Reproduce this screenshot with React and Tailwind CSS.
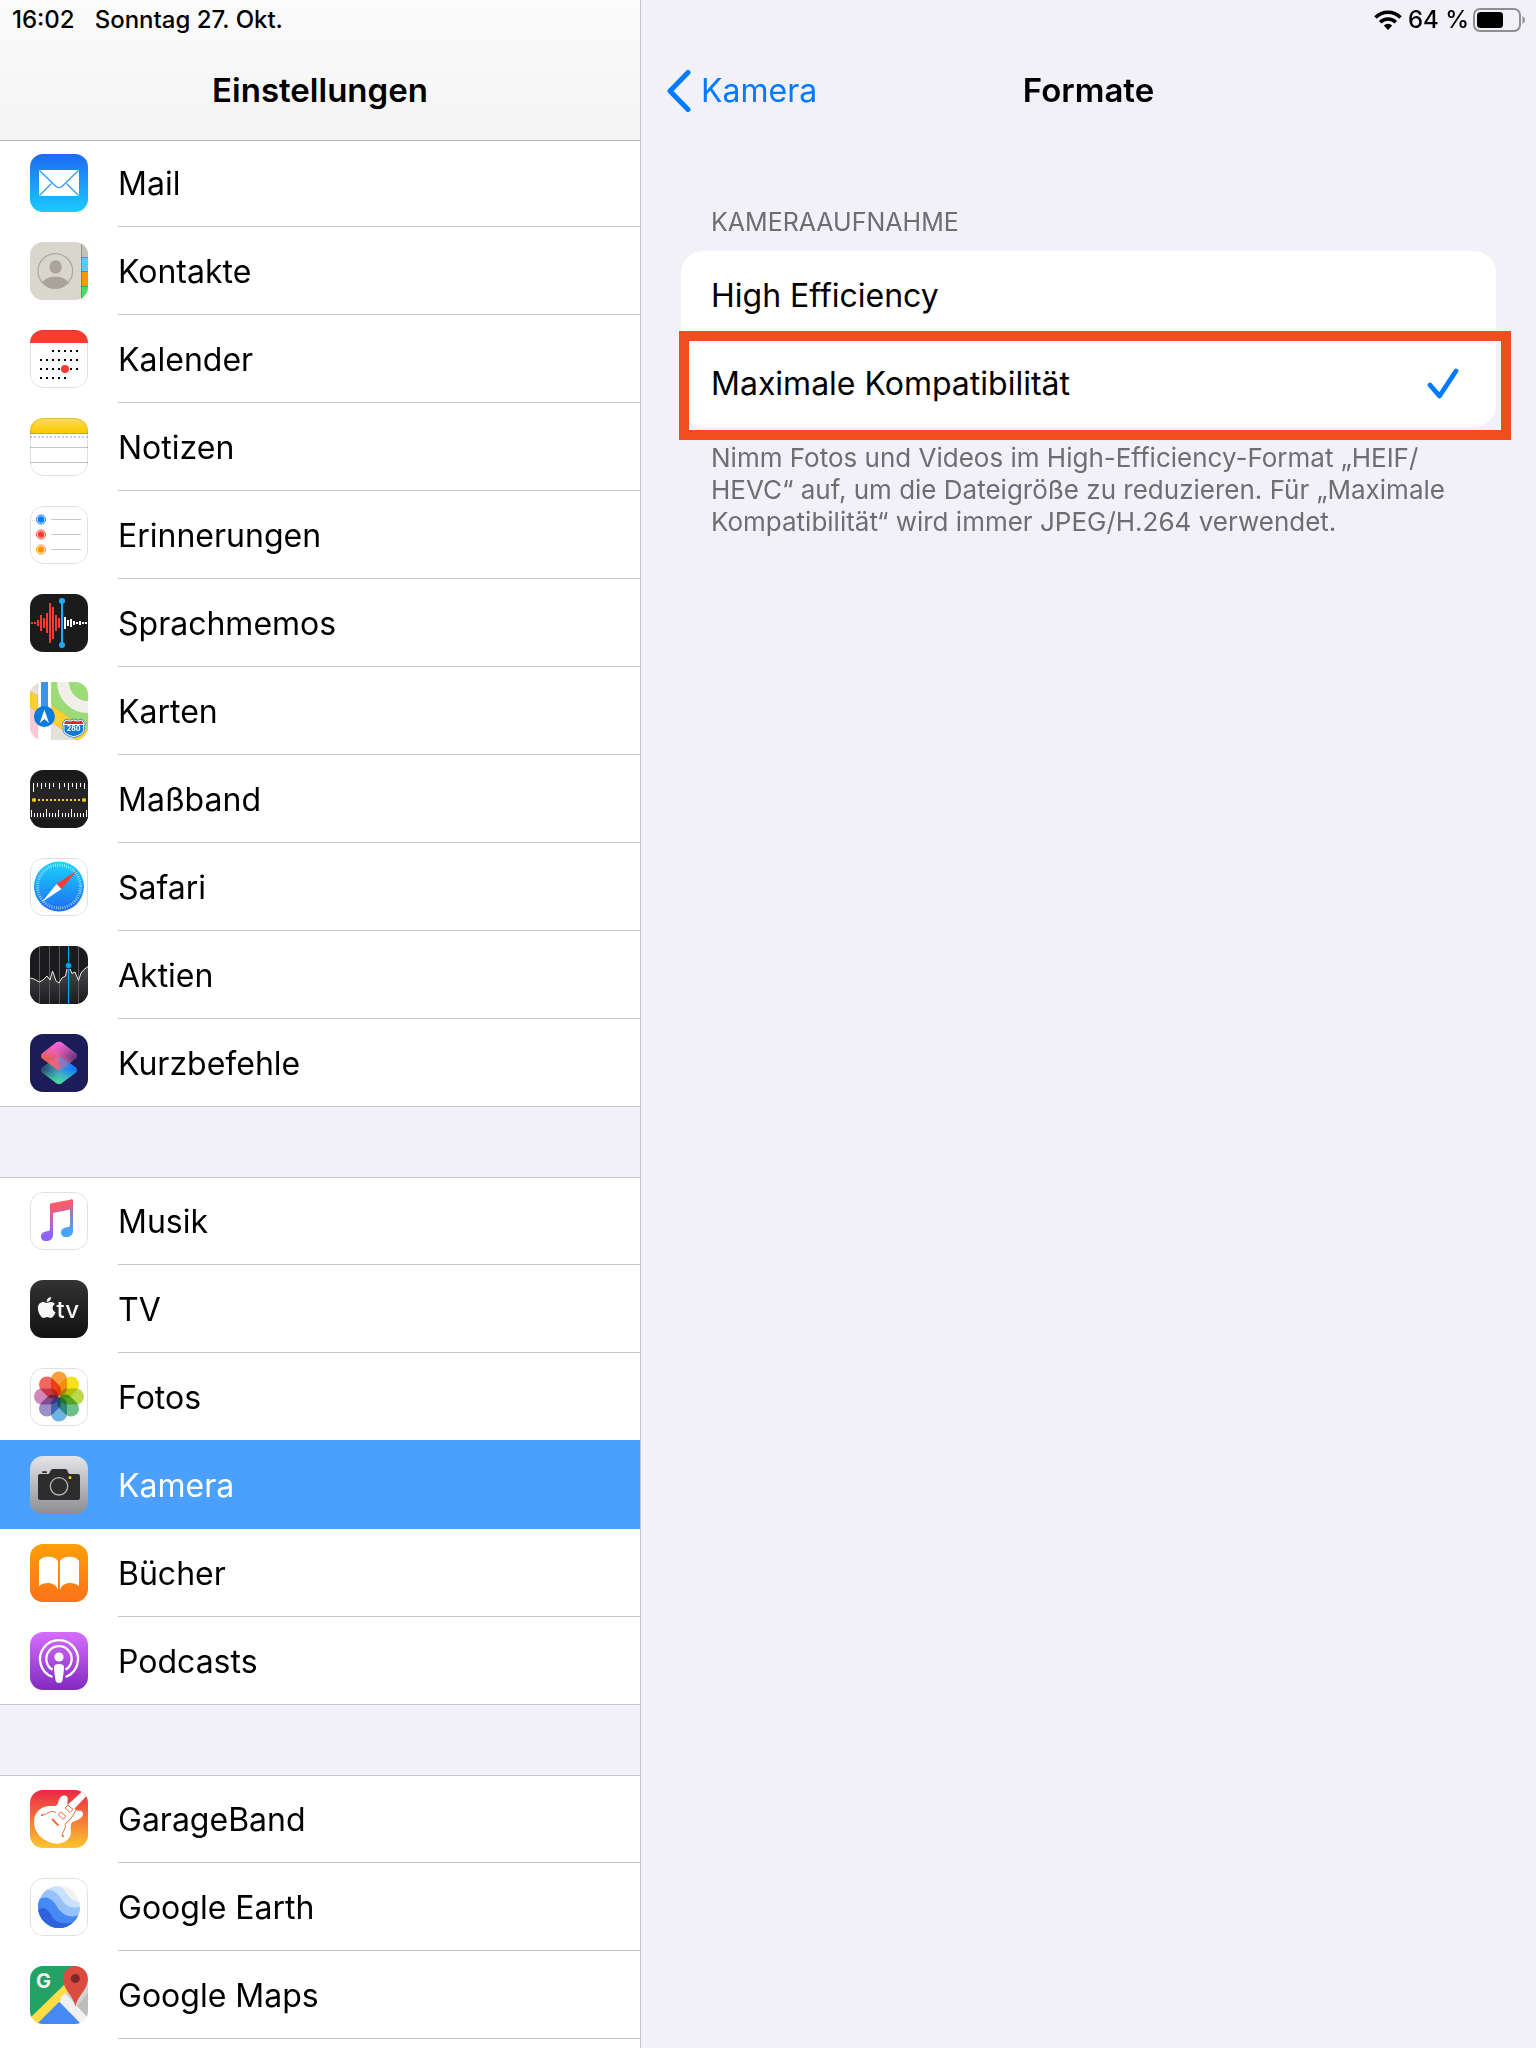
import React, { useState } from 'react';
import { FaApple } from 'react-icons/fa';

// Vertical gradient used by most of the app icons
const Fade = ({ id, from, to }) => (
    <linearGradient id={id} x1="0" y1="0" x2="0" y2="1">
        <stop offset="0" stopColor={from} />
        <stop offset="1" stopColor={to} />
    </linearGradient>
);

const Icon = ({ outlined, children }) => (
    <svg viewBox="0 0 58 58" className="size-[58px] shrink-0 rounded-[13px]" aria-hidden="true">
        {children}
        {outlined && <rect x="0.5" y="0.5" width="57" height="57" rx="12.5" fill="none" stroke="#000" strokeOpacity="0.12" />}
    </svg>
);

const MailIcon = () => (
    <Icon>
        <defs><Fade id="mail" from="#1d6bf2" to="#1bcafe" /></defs>
        <rect width="58" height="58" fill="url(#mail)" />
        <rect x="9" y="16" width="40" height="26" rx="1" fill="#fff" />
        <path d="M9.5 16.5L25 31.5Q29 36 33 31.5L48.5 16.5M9.5 41.5L21.5 29.5M48.5 41.5L36.5 29.5" fill="none" stroke="#2f97f7" strokeWidth="1.2" />
    </Icon>
);

const ContactsIcon = () => (
    <Icon>
        <defs>
            <clipPath id="contactClip"><circle cx="25.3" cy="29" r="17.5" /></clipPath>
        </defs>
        <rect width="58" height="58" fill="#d9d6cd" />
        <rect x="51" width="7" height="15" fill="#c3c0b7" />
        <rect x="51" y="15" width="7" height="14" fill="#5ac8fa" />
        <rect x="51" y="29" width="7" height="15" fill="#ff9500" />
        <rect x="51" y="44" width="7" height="14" fill="#4cd964" />
        <path d="M51.5 0V58M51 15.5H58M51 29.5H58M51 44.5H58" stroke="#000" strokeOpacity="0.22" />
        <circle cx="25.3" cy="29" r="17.3" fill="none" stroke="#aca79e" strokeWidth="1.2" />
        <g fill="#aaa39c" clipPath="url(#contactClip)">
            <ellipse cx="25.6" cy="25" rx="6.2" ry="6.8" />
            <ellipse cx="25.3" cy="46" rx="15" ry="11.5" />
        </g>
    </Icon>
);

const calendarRows = [
    [23, 29, 35, 41, 47],
    [11, 17, 23, 29, 35, 41, 47],
    [11, 17, 23, 29, 35, 41, 47],
    [11, 17, 23, 29, 35],
];

const CalendarIcon = () => (
    <Icon outlined>
        <rect width="58" height="58" fill="#fff" />
        <rect width="58" height="13" fill="#ff3b30" />
        {calendarRows.map((row, r) => row.map((x) => (
            <rect key={`${r}-${x}`} x={x - 1} y={20 + r * 9} width="2" height="2" />
        )))}
        <circle cx="35" cy="39" r="4" fill="#ff3b30" />
    </Icon>
);

const NotesIcon = () => (
    <Icon outlined>
        <defs><Fade id="notes" from="#fedc58" to="#fcc800" /></defs>
        <rect width="58" height="58" fill="#fff" />
        <rect width="58" height="15" fill="url(#notes)" />
        <path d="M0 15.5H58" stroke="#a9a28c" />
        <path d="M0 19H58" stroke="#cfcfcf" strokeWidth="2" strokeDasharray="2 2" />
        <path d="M0 29.5H58M0 44.5H58" stroke="#c6c6c6" />
    </Icon>
);

const RemindersIcon = () => (
    <Icon outlined>
        <rect width="58" height="58" fill="#fff" />
        {[[13.5, '#007aff'], [28.5, '#ff3b30'], [43.5, '#ff9500']].map(([y, color]) => (
            <g key={y}>
                <circle cx="11" cy={y} r="4.5" fill="none" stroke={color} />
                <circle cx="11" cy={y} r="3.2" fill={color} />
                <path d={`M21 ${y}H51`} stroke="#c8c8cc" />
            </g>
        ))}
    </Icon>
);

const VoiceMemosIcon = () => (
    <Icon>
        <rect width="58" height="58" fill="#1b1b1c" />
        {[1, 1, 3, 8, 5, 10, 20, 16, 8, 5].map((h, i) => (
            <rect key={i} x={1 + i * 3} y={29 - h} width="2" height={h * 2} fill="#ff3b30" />
        ))}
        {[6, 3, 4, 2, 1, 2, 1, 1].map((h, i) => (
            <rect key={i} x={34 + i * 3} y={29 - h} width="2" height={h * 2} fill="#fff" />
        ))}
        <path d="M32 7V51" stroke="#1badf8" strokeWidth="2" />
        <circle cx="32" cy="7" r="3" fill="#1badf8" />
        <circle cx="32" cy="51" r="3" fill="#1badf8" />
    </Icon>
);

const MapsIcon = () => (
    <Icon>
        <rect width="58" height="58" fill="#e4e1da" />
        <path d="M0 26L8 31V58H0Z" fill="#ffc9d5" />
        <path d="M21 0H58V49L21 23Z" fill="#9bdb78" />
        <circle cx="58" cy="0" r="25" fill="none" stroke="#f2efe8" strokeWidth="12" />
        <path d="M0 9L21 23L58 49V58H46L21 39L0 25Z" fill="#ffd030" stroke="#f2b21f" strokeWidth="0.7" />
        <rect x="8" width="13.3" height="58" fill="#fff" />
        <path d="M8 0V58M21.3 0V58" stroke="#000" strokeOpacity="0.12" strokeWidth="0.6" />
        <rect x="11" width="7" height="28" fill="#3c94e6" />
        <circle cx="14.4" cy="34.5" r="10.5" fill="#0a7bdd" />
        <path d="M14.4 27.5L19 41L14.4 37L9.8 41Z" fill="#fff" />
        <path d="M35.5 37Q40 39.5 43.7 37Q47.5 39.5 52 37L55.3 42C53 45 56 49 52.5 52Q49 54.5 43.7 55.7Q38.5 54.5 35 52C31.5 49 34.5 45 32.2 42Z" fill="#fff" stroke="#1d79cf" strokeWidth="0.8" />
        <path d="M36 38.6Q40 40.6 43.7 38.4Q47.5 40.6 51.5 38.6L53.7 42H33.8Z" fill="#e0242f" />
        <path d="M34 43H53.5C52 46 54.5 49 51.5 51Q48.5 53.3 43.7 54.3Q39 53.3 36 51C33 49 35.5 46 34 43Z" fill="#1479d4" />
        <text x="43.7" y="49.4" textAnchor="middle" fontFamily="Inter, sans-serif" fontSize="7" fontWeight="700" fill="#fff">280</text>
    </Icon>
);

const topTicks = [[3, 9], [7, 4], [11, 6], [15, 4], [19, 6], [23, 4], [29, 6], [34, 4], [38, 7], [42, 4], [46, 6], [50, 4], [54, 6]];
const bottomTicks = [[1, 7], [4, 4], [7, 4], [10, 4], [13, 4], [16, 8], [19, 4], [22, 4], [25, 4], [28, 7], [32, 4], [35, 4], [38, 4], [41, 8], [44, 4], [47, 4], [50, 4], [53, 4], [56, 7]];

const MeasureIcon = () => (
    <Icon>
        <rect width="58" height="58" fill="#1a1a1a" />
        <rect y="11" width="58" height="38" fill="#242424" />
        {topTicks.map(([x, h]) => <rect key={x} x={x} y="13" width="1" height={h} fill="#fff" />)}
        {bottomTicks.map(([x, h]) => <rect key={x} x={x} y={47 - h} width="1" height={h} fill="#fff" />)}
        <path d="M8 30H51" stroke="#ffcc00" strokeWidth="2" strokeDasharray="2 2" />
        <circle cx="4" cy="30" r="2.1" fill="#ffcc00" />
        <circle cx="54" cy="30" r="2.1" fill="#ffcc00" />
    </Icon>
);

const SafariIcon = () => (
    <Icon outlined>
        <defs><Fade id="safari" from="#1bd3fd" to="#1e6cf1" /></defs>
        <rect width="58" height="58" fill="#fff" />
        <circle cx="29" cy="28.5" r="25" fill="url(#safari)" />
        <circle cx="29" cy="28.5" r="21.5" fill="none" stroke="#fff" strokeOpacity="0.75" strokeWidth="3" strokeDasharray="0.7 1.55" />
        <path d="M47 12.5L31.5 31L26.5 26Z" fill="#ff3b30" />
        <path d="M12 44L26.5 26L31.5 31Z" fill="#fff" />
    </Icon>
);

const StocksIcon = () => (
    <Icon>
        <defs><Fade id="stocks" from="#4a4a4c" to="#1b1b1d" /></defs>
        <rect width="58" height="58" fill="#1b1b1d" />
        <path d="M0 32L4 33L9.5 36L13 34L17 30L20 34L22.5 25L26 35L29 37L32 32L35.5 30L37 22H40L42 27.5L45 26L48.5 34.5L51 27L54 23.5L58 20.5V58H0Z" fill="url(#stocks)" />
        <path d="M9.5 0V58M19.5 0V58M29.5 0V58M48.5 0V58" stroke="#59595b" />
        <path d="M0 32L4 33L9.5 36L13 34L17 30L20 34L22.5 25L26 35L29 37L32 32L35.5 30L37 23M40 23L42 27.5L45 26L48.5 34.5L51 27L54 23.5L58 20.5" fill="none" stroke="#e8e8e8" strokeWidth="1" strokeLinejoin="round" />
        <path d="M38.5 0V58" stroke="#00a6ff" />
        <circle cx="38.5" cy="19.5" r="3.2" fill="#00a6ff" stroke="#1b1b1d" />
    </Icon>
);

const ShortcutsIcon = () => (
    <Icon>
        <defs>
            <linearGradient id="shortTop" x1="0.2" y1="0.8" x2="0.9" y2="0.5">
                <stop offset="0" stopColor="#ff6453" />
                <stop offset="0.5" stopColor="#ee5f9c" />
                <stop offset="1" stopColor="#6b3a80" />
            </linearGradient>
            <linearGradient id="shortPink" x1="0" y1="0" x2="0" y2="1">
                <stop offset="0" stopColor="#ff66e0" />
                <stop offset="0.55" stopColor="#ff66e0" stopOpacity="0" />
            </linearGradient>
            <linearGradient id="shortBottom" x1="0.1" y1="0.5" x2="0.9" y2="0.5">
                <stop offset="0" stopColor="#2c5574" />
                <stop offset="0.5" stopColor="#3e9ecb" />
                <stop offset="1" stopColor="#137dff" />
            </linearGradient>
            <linearGradient id="shortGreen" x1="0" y1="1" x2="0" y2="0">
                <stop offset="0" stopColor="#47e09c" />
                <stop offset="0.5" stopColor="#47e09c" stopOpacity="0" />
            </linearGradient>
        </defs>
        <rect width="58" height="58" fill="#1c1c58" />
        <path d="M25.5 23.5Q29 21 32.5 23.5L46 33.5Q48 36 46 38.5L32.5 48.5Q29 51.5 25.5 48.5L12 38.5Q10 36 12 33.5Z" fill="url(#shortBottom)" />
        <path d="M25.5 23.5Q29 21 32.5 23.5L46 33.5Q48 36 46 38.5L32.5 48.5Q29 51.5 25.5 48.5L12 38.5Q10 36 12 33.5Z" fill="url(#shortGreen)" />
        <path d="M25.5 9Q29 6.5 32.5 9L46 19.5Q48 22 46 24.5L32.5 34.5Q29 37.5 25.5 34.5L12 24.5Q10 22 12 19.5Z" fill="url(#shortTop)" fillOpacity="0.92" />
        <path d="M25.5 9Q29 6.5 32.5 9L46 19.5Q48 22 46 24.5L32.5 34.5Q29 37.5 25.5 34.5L12 24.5Q10 22 12 19.5Z" fill="url(#shortPink)" />
        <path d="M29 22Q31 22 32.5 23.5L40 29L32.5 34.5Q30.5 36 29 36Z" fill="#3d8fe0" fillOpacity="0.5" />
    </Icon>
);

const MusicIcon = () => (
    <Icon outlined>
        <defs>
            <linearGradient id="music" gradientUnits="userSpaceOnUse" x1="24" y1="10" x2="30" y2="46">
                <stop offset="0.1" stopColor="#fc5c65" />
                <stop offset="0.5" stopColor="#b865c4" />
                <stop offset="0.9" stopColor="#8a63ff" />
            </linearGradient>
            <linearGradient id="musicBlue" gradientUnits="userSpaceOnUse" x1="41" y1="10" x2="41" y2="40">
                <stop offset="0" stopColor="#f05a76" />
                <stop offset="0.5" stopColor="#7e86cf" />
                <stop offset="1" stopColor="#45a6fc" />
            </linearGradient>
        </defs>
        <rect width="58" height="58" fill="#fff" />
        <path d="M20 13Q20 11.5 21.5 11.2L41.5 7.6Q43 7.4 43 9V18L40 17.6L23 21V43C23 47 20 49 16 49C12.5 49 11 47 11 44.5C11 41 14 39.7 17 39.2C19.5 38.8 20 38.5 20 36Z" fill="url(#music)" />
        <path d="M40 8L41.5 7.6Q43 7.4 43 9V39C43 43 40 45 36 45C32.5 45 31 43 31 40.5C31 37 34 35.7 37 35.2C39.5 34.8 40 34.5 40 32Z" fill="url(#musicBlue)" />
    </Icon>
);

const TvIcon = () => (
    <Icon>
        <defs><Fade id="tv" from="#333" to="#111" /></defs>
        <rect width="58" height="58" fill="url(#tv)" />
        <FaApple x="4.7" y="15.4" size={24} color="#f6f6f6" />
        <text x="26.5" y="37.7" fontFamily="Inter, sans-serif" fontSize="24" fontWeight="500" fill="#f6f6f6">tv</text>
    </Icon>
);

const petals = ['#fa9f3b', '#f8e11c', '#b9da4c', '#6cc088', '#6fb3e2', '#9b8ec9', '#d288b8', '#f06762'];

const PhotosIcon = () => (
    <Icon outlined>
        <rect width="58" height="58" fill="#fff" />
        {petals.map((color, i) => (
            <rect key={color} x="21" y="3.5" width="16" height="24.5" rx="8" fill={color} transform={`rotate(${i * 45} 29 28.5)`} className="mix-blend-multiply" />
        ))}
    </Icon>
);

const CameraIcon = () => (
    <Icon>
        <defs><Fade id="camera" from="#e5e4e9" to="#8d8c91" /></defs>
        <rect width="58" height="58" fill="url(#camera)" />
        <path d="M8 20Q8 18 10 18H18C21 17.5 19.5 13 23 13H35C38.5 13 37 17.5 40 18H48Q50 18 50 20V42Q50 44 48 44H10Q8 44 8 42Z" fill="#2d2d2d" />
        <rect x="12" y="15.3" width="5" height="1.7" rx="0.8" fill="#2d2d2d" />
        <circle cx="29" cy="30.3" r="8.7" fill="none" stroke="#b4b4b6" strokeWidth="1.3" />
        <circle cx="40" cy="21.5" r="1.5" fill="#ffcc00" />
    </Icon>
);

const BooksIcon = () => (
    <Icon>
        <defs><Fade id="books" from="#fe9f07" to="#fa7219" /></defs>
        <rect width="58" height="58" fill="url(#books)" />
        <path d="M9 17C12 11.5 25.5 11 28 17.5V46C25.5 37.5 14.5 37.5 9 42Z" fill="#fff" />
        <path d="M49 17C46 11.5 32.5 11 30 17.5V46C32.5 37.5 43.5 37.5 49 42Z" fill="#fff" />
    </Icon>
);

const PodcastsIcon = () => (
    <Icon>
        <defs><Fade id="podcasts" from="#d66efd" to="#822abf" /></defs>
        <rect width="58" height="58" fill="url(#podcasts)" />
        <path d="M22.5 45A19 19 0 1 1 35.5 45" fill="none" stroke="#fff" strokeWidth="2.3" />
        <path d="M22.5 37.8A12.7 12.7 0 1 1 35.5 37.8" fill="none" stroke="#fff" strokeWidth="2.3" />
        <circle cx="29" cy="25" r="4.6" fill="#fff" />
        <path d="M24 35Q24 32 29 32Q34 32 34 35C34 39 33 45 32.3 49Q31.8 51 29 51Q26.2 51 25.7 49C25 45 24 39 24 35Z" fill="#fff" />
    </Icon>
);

const GarageBandIcon = () => (
    <Icon>
        <defs><Fade id="garage" from="#ea2746" to="#fdc62c" /></defs>
        <rect width="58" height="58" fill="url(#garage)" />
        <path d="M4 32C4 22 11 16.5 19 16C24 15.8 27 17 28 13C29 8 31 5.5 35 5.5C39.5 6.5 37 11 37.5 15L52 1.5L56.5 6L44.5 18.5C47 22.5 52 19 53 23C53.5 28 48 30 43.5 31.5C38.5 34 42 40 40.5 45C38 52.5 29 55.5 20 52.5C10 48.5 4 41 4 32Z" fill="#fff" />
        <g fill="none" stroke="#f2663a" strokeWidth="1">
            <path d="M28 24.5L31 21.8L36 26.5L33 29.3ZM35 18L38 15L43 19.5L40 22.5Z" />
            <path d="M22 29L28.5 35.5" strokeWidth="1.8" />
            <path d="M11 25C15 26 18 21.5 23 21.5C25 21.5 26 22 25 23M35 34.5C37 37 33 40 32 45.5C32 47 33 46.5 33.5 46M35 34.5L42 27L46 20" />
        </g>
        <g fill="#f2663a">
            <circle cx="12" cy="25" r="1" />
            <circle cx="33" cy="46" r="0.9" />
        </g>
    </Icon>
);

const EarthIcon = () => (
    <Icon outlined>
        <defs>
            <clipPath id="globe"><circle cx="29" cy="29" r="21" /></clipPath>
        </defs>
        <rect width="58" height="58" fill="#fff" />
        <g clipPath="url(#globe)">
            <rect x="8" y="8" width="42" height="42" fill="#f1f1f2" />
            <path d="M8 12C20 4 30 6 35 13C39 19 42 24 50 24V50H8Z" fill="#c7e2ff" />
            <path d="M8 15C17 9 25 12 30 19C35 27 39 31 50 29V50H8Z" fill="#97c1fc" />
            <path d="M8 23C13 17 21 19 26 27C31 36 38 41 50 37V50H8Z" fill="#4688f4" />
            <path d="M8 33C12 27 18 31 21 37C26 46 35 47 44 44V52H8Z" fill="#2d62dc" />
        </g>
    </Icon>
);

const GoogleMapsIcon = () => (
    <Icon>
        <rect width="58" height="58" fill="#22a365" />
        <path d="M29 27L58 4V58H45Z" fill="#d1d1d1" />
        <path d="M46 42L58 27V54Z" fill="#bdbdbd" />
        <path d="M6 58L29.5 34L52 58Z" fill="#4688f4" />
        <path d="M30 27L60 58H51L29 35.5L26 32Z" fill="#f1f1f1" />
        <path d="M0 52L36 17L41 24L7 58H0Z" fill="#ffdd44" />
        <path d="M30 32L35 27L47 40L60 54V58H56Z" fill="#f1f1f1" />
        <path d="M45.3 41C44.5 31 33 24 33 12.5A12.5 12.5 0 0 1 58 12.5C58 24 46.3 31 45.3 41Z" fill="#db4b3f" />
        <circle cx="45.3" cy="12.5" r="4.5" fill="#7e2b27" />
        <text x="6" y="21.8" fontFamily="Inter, sans-serif" fontSize="20" fontWeight="700" fill="#f3f3f3">G</text>
    </Icon>
);

const groups = [
    [
        { name: 'Mail', icon: MailIcon },
        { name: 'Kontakte', icon: ContactsIcon },
        { name: 'Kalender', icon: CalendarIcon },
        { name: 'Notizen', icon: NotesIcon },
        { name: 'Erinnerungen', icon: RemindersIcon },
        { name: 'Sprachmemos', icon: VoiceMemosIcon },
        { name: 'Karten', icon: MapsIcon },
        { name: 'Maßband', icon: MeasureIcon },
        { name: 'Safari', icon: SafariIcon },
        { name: 'Aktien', icon: StocksIcon },
        { name: 'Kurzbefehle', icon: ShortcutsIcon },
    ],
    [
        { name: 'Musik', icon: MusicIcon },
        { name: 'TV', icon: TvIcon },
        { name: 'Fotos', icon: PhotosIcon },
        { name: 'Kamera', icon: CameraIcon },
        { name: 'Bücher', icon: BooksIcon },
        { name: 'Podcasts', icon: PodcastsIcon },
    ],
    [
        { name: 'GarageBand', icon: GarageBandIcon },
        { name: 'Google Earth', icon: EarthIcon },
        { name: 'Google Maps', icon: GoogleMapsIcon },
    ],
];

// The active row covers the separator of the row above it
const SidebarRow = ({ name, icon: AppIcon, active, last, onSelect }) => (
    <li>
        <button
            type="button"
            onClick={() => onSelect(name)}
            className={`flex w-full items-center gap-[30px] pl-[30px] text-left ${active ? 'relative -mt-px h-[89px] bg-[#4ba0ff] pt-px text-white' : 'h-[88px]'}`}
        >
            <AppIcon />
            <span className={`flex h-full flex-1 items-center pt-0.5 ${last || active ? '' : 'border-b border-[#c6c6c8]'}`}>{name}</span>
        </button>
    </li>
);

const groupStyles = [
    'shadow-[inset_0_-1px_0_#c6c6c8]',
    'shadow-[inset_0_1px_0_#c6c6c8,inset_0_-1px_0_#c6c6c8]',
    'pb-[9px] shadow-[inset_0_1px_0_#c6c6c8]',
];

const Sidebar = () => {
    const [selected, setSelected] = useState('Kamera');

    return (
        <aside className="w-5/12">
            <header className="relative h-[141px] border-b border-[#b2b2b2] bg-linear-to-b from-[#fbfbfb] to-[#f4f4f4]">
                <div className="flex h-10 items-center gap-5 pl-3 text-[24px] font-medium">
                    <span>16:02</span>
                    <span>Sonntag 27. Okt.</span>
                </div>
                <h1 className="flex h-[100px] items-center justify-center pt-0.5 text-[33px] font-semibold">Einstellungen</h1>
            </header>
            {/* The list is scrolled slightly under the header */}
            <nav className="-mt-0.5 flex flex-col gap-[70px] text-[32px]">
                {groups.map((items, g) => (
                    <ul key={g} className={`bg-white ${groupStyles[g]}`}>
                        {items.map((item, i) => (
                            <SidebarRow
                                key={item.name}
                                {...item}
                                active={item.name === selected}
                                last={g < 2 && i === items.length - 1}
                                onSelect={setSelected}
                            />
                        ))}
                    </ul>
                ))}
            </nav>
        </aside>
    );
};

const StatusIcons = () => (
    <div className="flex h-10 items-center justify-end gap-1.5 pr-2.5 text-[24px] font-medium">
        <svg viewBox="0 0 28 20" className="h-5 w-7" aria-hidden="true">
            <path d="M1.5 7.5A17.5 17.5 0 0 1 26.5 7.5" fill="none" stroke="#000" strokeWidth="3.6" />
            <path d="M6.2 12.2A11 11 0 0 1 21.8 12.2" fill="none" stroke="#000" strokeWidth="3.6" />
            <path d="M14 20L9.8 15.5A6 6 0 0 1 18.2 15.5Z" />
        </svg>
        <span>64 %</span>
        <svg viewBox="0 0 53 24" className="-ml-0.5 h-6 w-[53px]" aria-hidden="true">
            <rect x="1" y="1" width="46" height="22" rx="6" fill="none" stroke="#8f8f93" strokeWidth="2" />
            <rect x="4" y="4" width="26" height="16" rx="3.5" />
            <path d="M49.5 8Q52 9.5 52 12T49.5 16Z" fill="#8f8f93" />
        </svg>
    </div>
);

const formats = ['High Efficiency', 'Maximale Kompatibilität'];

const FormatSettings = () => {
    const [format, setFormat] = useState('Maximale Kompatibilität');

    return (
        <main className="flex-1 border-l border-[#c3c2c8]">
            <StatusIcons />
            <header className="grid h-[100px] grid-cols-[1fr_auto_1fr] items-center pt-0.5">
                <a href="#kamera" className="flex items-center gap-2.5 pl-[25px] text-[32px] text-[#007aff]">
                    <svg viewBox="0 0 25 44" className="h-11 w-[25px]" aria-hidden="true">
                        <path d="M22 3.5L4 22L22 40.5" fill="none" stroke="#007aff" strokeWidth="5" strokeLinecap="round" strokeLinejoin="round" />
                    </svg>
                    Kamera
                </a>
                <h2 className="text-[33px] font-semibold">Formate</h2>
            </header>

            <fieldset className="mt-16 px-10">
                <legend className="pb-[11px] pl-[30px] text-[25px] leading-9 text-[#6d6d72]">KAMERAAUFNAHME</legend>
                <div className="relative rounded-[22px] bg-white text-[32px]">
                    {formats.map((name) => (
                        <label key={name} className="flex h-[88px] items-center justify-between pt-0.5 pr-[37px] pl-[30px]">
                            <input
                                type="radio"
                                name="format"
                                className="sr-only"
                                checked={format === name}
                                onChange={() => setFormat(name)}
                            />
                            {name}
                            {format === name && (
                                <svg viewBox="0 0 32 32" className="size-8" aria-hidden="true">
                                    <path d="M3 17L12.5 28L29 3" fill="none" stroke="#007aff" strokeWidth="4.8" strokeLinecap="round" strokeLinejoin="round" />
                                </svg>
                            )}
                        </label>
                    ))}
                    {/* Orange marker around the compatible format */}
                    <div className="pointer-events-none absolute top-20 -right-[15px] -left-0.5 h-[109px] border-10 border-[#f04e1f]" />
                </div>
                <p className="pt-[15px] pl-[30px] text-[26px] leading-8 text-[#6d6d72]">
                    Nimm Fotos und Videos im High-Efficiency-Format „HEIF/<br />
                    HEVC“ auf, um die Dateigröße zu reduzieren. Für „Maximale<br />
                    Kompatibilität“ wird immer JPEG/H.264 verwendet.
                </p>
            </fieldset>
        </main>
    );
};

const App = () => (
    <div className="flex min-h-screen bg-[#f2f1f7] font-['Inter',sans-serif] text-black">
        <Sidebar />
        <FormatSettings />
    </div>
);

export default App;
